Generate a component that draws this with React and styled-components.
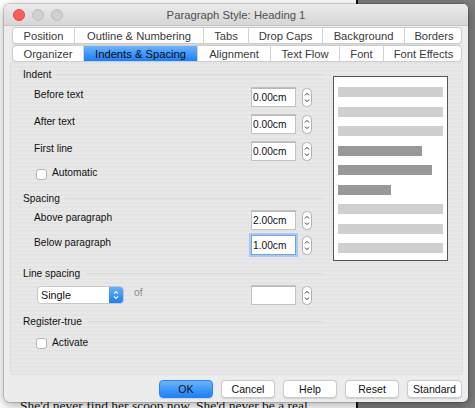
import React from 'react';
import styled, { createGlobalStyle } from 'styled-components';

const Global = createGlobalStyle`
  html, body { margin: 0; padding: 0; }
  body {
    width: 475px;
    height: 408px;
    overflow: hidden;
    font-family: "Liberation Sans", Arial, sans-serif;
  }
`;

const Desktop = styled.div`
  position: relative;
  width: 475px;
  height: 408px;
  overflow: hidden;
  display: flex;
`;

const Page = styled.div`
  width: 356px;
  background: #fff;
  display: flex;
  flex-direction: column;
  justify-content: flex-end;
`;

const PageText = styled.p`
  margin: 0 0 -7px 20px;
  font-family: "Liberation Serif", "Times New Roman", serif;
  font-size: 13.5px;
  line-height: 18px;
  color: #111;
  white-space: nowrap;
`;

const PageEdge = styled.div`
  width: 2px;
  background: #111;
`;

const Gutter = styled.div`
  flex: 1;
  background: #7c7c7c;
`;

const Window = styled.div`
  position: absolute;
  left: 4px;
  top: 4px;
  width: 464px;
  height: 398px;
  border-radius: 5px;
  overflow: hidden;
  background: #ececec;
  box-shadow: 0 0 0 0.5px rgba(0, 0, 0, 0.3), 0 3px 12px rgba(0, 0, 0, 0.35);
  display: flex;
  flex-direction: column;
`;

const TitleBar = styled.div`
  height: 21px;
  flex: none;
  display: grid;
  grid-template-columns: 70px 1fr 70px;
  align-items: center;
  background: linear-gradient(#ebebeb, #d6d6d6);
  border-bottom: 1px solid #c4c4c4;
`;

const Lights = styled.div`
  display: flex;
  gap: 7px;
  padding-left: 9px;
`;

const Light = styled.span`
  width: 12px;
  height: 12px;
  border-radius: 50%;
  background: ${(p) => (p.red ? '#fc5e57' : '#d0d0d0')};
  border: 0.5px solid ${(p) => (p.red ? '#de4a43' : '#bcbcbc')};
  box-sizing: border-box;
`;

const Title = styled.div`
  text-align: center;
  font-size: 11.3px;
  color: #4f4f4f;
`;

const Tabs = styled.div`
  display: flex;
  flex-direction: column;
  gap: 1px;
  padding: 1px 6px 0 8px;
`;

const TabRow = styled.div`
  display: flex;
  height: 17px;
  background: #fff;
  border: 1px solid #cdcdcd;
  border-radius: 4px;
  box-sizing: border-box;
  overflow: hidden;
  box-shadow: 0 0.5px 1px rgba(0, 0, 0, 0.08);
`;

const Tab = styled.div`
  width: ${(p) => p.w}px;
  flex: none;
  display: flex;
  align-items: center;
  justify-content: center;
  font-size: 11.2px;
  color: ${(p) => (p.active ? '#0b0b0b' : '#3a3a3a')};
  background: ${(p) => (p.active ? 'linear-gradient(#6db2fb, #1b7ffb)' : 'transparent')};
  border-left: ${(p) => (p.first ? 'none' : '1px solid #d4d4d4')};
  box-sizing: border-box;
  white-space: nowrap;
`;

const Panel = styled.div`
  margin: 0 5px 0 6px;
  height: 313px;
  flex: none;
  box-sizing: border-box;
  border: 1px solid #dedede;
  border-top: none;
  border-radius: 0 0 4px 4px;
  background: repeating-linear-gradient(#e4e4e4 0 2px, #e8e8e8 2px 4px);
  display: flex;
  padding: 5px 12px 0 12px;
  gap: 10px;
`;

const Form = styled.div`
  width: 300px;
  display: flex;
  flex-direction: column;
`;

const Header = styled.div`
  display: flex;
  align-items: center;
  gap: 6px;
  height: 14px;
  margin-top: ${(p) => p.top || 0}px;
  font-size: 10.2px;
  color: #111;

  &::after {
    content: '';
    flex: 1;
    height: 1px;
    background: #dadada;
  }
`;

const Row = styled.div`
  display: flex;
  align-items: center;
  height: 20px;
  padding: 0 11px;
  margin-top: ${(p) => p.top || 0}px;
`;

const Label = styled.span`
  flex: 1;
  font-size: 10.2px;
  color: #111;
  margin-bottom: 6px;
`;

const Field = styled.div`
  width: 45px;
  height: 20px;
  box-sizing: border-box;
  background: #fff;
  border: 1px solid ${(p) => (p.focus ? '#6fa5e8' : '#c2c2c2')};
  box-shadow: ${(p) => (p.focus ? '0 0 0 2px #a8c9f2' : 'inset 0 1px 0 #b8b8b8')};
  font-size: 10.2px;
  color: #111;
  display: flex;
  align-items: center;
  padding-left: 1px;
`;

const SpinBox = styled.div`
  margin-left: 6px;
  width: 10px;
  height: 19px;
  display: flex;
`;

const Check = styled.span`
  width: 11px;
  height: 11px;
  flex: none;
  box-sizing: border-box;
  border: 1px solid #b5b5b5;
  border-radius: 3px;
  background: #fff;
`;

const CheckRow = styled.div`
  display: flex;
  align-items: center;
  gap: 5px;
  height: 12px;
  padding-left: 13px;
  margin-top: ${(p) => p.top || 0}px;
  font-size: 10.2px;
  color: #111;

  span + span {
    margin-bottom: ${(p) => p.lift || 0}px;
  }
`;

const SelectRow = styled.div`
  display: flex;
  align-items: center;
  height: 20px;
  padding: 0 11px 0 14px;
  margin-top: ${(p) => p.top || 0}px;
`;

const Select = styled.div`
  width: 87px;
  height: 18px;
  box-sizing: border-box;
  border-radius: 4px;
  background: #fff;
  border: 1px solid #c8c8c8;
  display: flex;
  align-items: center;
  overflow: hidden;
  font-size: 10.8px;
  color: #111;
`;

const SelectText = styled.span`
  flex: 1;
  padding-left: 3px;
`;

const SelectArrow = styled.span`
  width: 14px;
  height: 100%;
  background: linear-gradient(#66aefb, #1a7ffb);
  display: flex;
  align-items: center;
  justify-content: center;
`;

const Of = styled.span`
  flex: 1;
  margin-left: 10px;
  margin-bottom: 5px;
  font-size: 10.2px;
  color: #8a8a8a;
`;

const Preview = styled.div`
  margin-top: 9px;
  width: 115px;
  height: 185px;
  box-sizing: border-box;
  background: #fff;
  border: 1px solid #555;
  display: flex;
  flex-direction: column;
  gap: 9.5px;
  padding: 10px 4px 0;
`;

const Bar = styled.div`
  height: 10px;
  flex: none;
  width: ${(p) => p.w || '100%'};
  background: ${(p) => (p.dark ? '#999' : '#cfcfcf')};
`;

const Buttons = styled.div`
  display: flex;
  justify-content: flex-end;
  gap: 8px;
  padding: 5px 6px 0 0;
`;

const Button = styled.div`
  width: ${(p) => p.w || 54}px;
  height: 18px;
  box-sizing: border-box;
  border-radius: 4px;
  display: flex;
  align-items: center;
  justify-content: center;
  font-size: 10.6px;
  color: #111;
  background: ${(p) => (p.primary ? 'linear-gradient(#6cb4fb, #1a80fb)' : '#fff')};
  border: 1px solid ${(p) => (p.primary ? '#2a83f0' : '#cbcbcb')};
  box-shadow: 0 0.5px 1px rgba(0, 0, 0, 0.12);
`;

const Spinner = () => (
  <SpinBox>
    <svg width="10" height="19" viewBox="0 0 10 19">
      <rect x="0.5" y="0.5" width="9" height="18" rx="4" fill="#fff" stroke="#b0b0b0" />
      <path d="M3 7.4 L5 5.4 L7 7.4" fill="none" stroke="#333" strokeWidth="1" />
      <path d="M3 11.6 L5 13.6 L7 11.6" fill="none" stroke="#333" strokeWidth="1" />
    </svg>
  </SpinBox>
);

const tabsTop = [
  ['Position', 61],
  ['Outline & Numbering', 129],
  ['Tabs', 45],
  ['Drop Caps', 74],
  ['Background', 82],
  ['Borders', 59],
];

const tabsBottom = [
  ['Organizer', 70],
  ['Indents & Spacing', 114],
  ['Alignment', 73],
  ['Text Flow', 69],
  ['Font', 44],
  ['Font Effects', 80],
];

const bars = [
  {}, {}, {},
  { dark: true, w: '84px' },
  { dark: true, w: '94px' },
  { dark: true, w: '53px' },
  {}, {}, {},
];

const SpinField = ({ label, value, top, focus }) => (
  <Row top={top}>
    <Label>{label}</Label>
    <Field focus={focus}>{value}</Field>
    <Spinner />
  </Row>
);

export default function App() {
  return (
    <Desktop>
      <Global />
      <Page>
        <PageText>She'd never find her scoop now. She'd never be a real</PageText>
      </Page>
      <PageEdge />
      <Gutter />
      <Window>
        <TitleBar>
          <Lights>
            <Light red />
            <Light />
            <Light />
          </Lights>
          <Title>Paragraph Style: Heading 1</Title>
          <span />
        </TitleBar>
        <Tabs>
          <TabRow>
            {tabsTop.map(([t, w], i) => (
              <Tab key={t} w={w} first={i === 0}>{t}</Tab>
            ))}
          </TabRow>
          <TabRow>
            {tabsBottom.map(([t, w], i) => (
              <Tab key={t} w={w} first={i === 0} active={t === 'Indents & Spacing'}>{t}</Tab>
            ))}
          </TabRow>
        </Tabs>
        <Panel>
          <Form>
            <Header>Indent</Header>
            <SpinField label="Before text" value="0.00cm" top={6} />
            <SpinField label="After text" value="0.00cm" top={7} />
            <SpinField label="First line" value="0.00cm" top={7} />
            <CheckRow top={7} lift={3}>
              <Check />
              <span>Automatic</span>
            </CheckRow>
            <Header top={11}>Spacing</Header>
            <SpinField label="Above paragraph" value="2.00cm" top={5} />
            <SpinField label="Below paragraph" value="1.00cm" top={5} focus />
            <Header top={11}>Line spacing</Header>
            <SelectRow top={5}>
              <Select>
                <SelectText>Single</SelectText>
                <SelectArrow>
                  <svg width="6" height="10" viewBox="0 0 6 10">
                    <path d="M1 3.6 L3 1.6 L5 3.6 M1 6.4 L3 8.4 L5 6.4" fill="none" stroke="#fff" strokeWidth="1.1" />
                  </svg>
                </SelectArrow>
              </Select>
              <Of>of</Of>
              <Field />
              <Spinner />
            </SelectRow>
            <Header top={9}>Register-true</Header>
            <CheckRow top={9} lift={1}>
              <Check />
              <span>Activate</span>
            </CheckRow>
          </Form>
          <Preview>
            {bars.map((b, i) => (
              <Bar key={i} dark={b.dark} w={b.w} />
            ))}
          </Preview>
        </Panel>
        <Buttons>
          <Button primary>OK</Button>
          <Button>Cancel</Button>
          <Button>Help</Button>
          <Button>Reset</Button>
          <Button w={55}>Standard</Button>
        </Buttons>
      </Window>
    </Desktop>
  );
}
